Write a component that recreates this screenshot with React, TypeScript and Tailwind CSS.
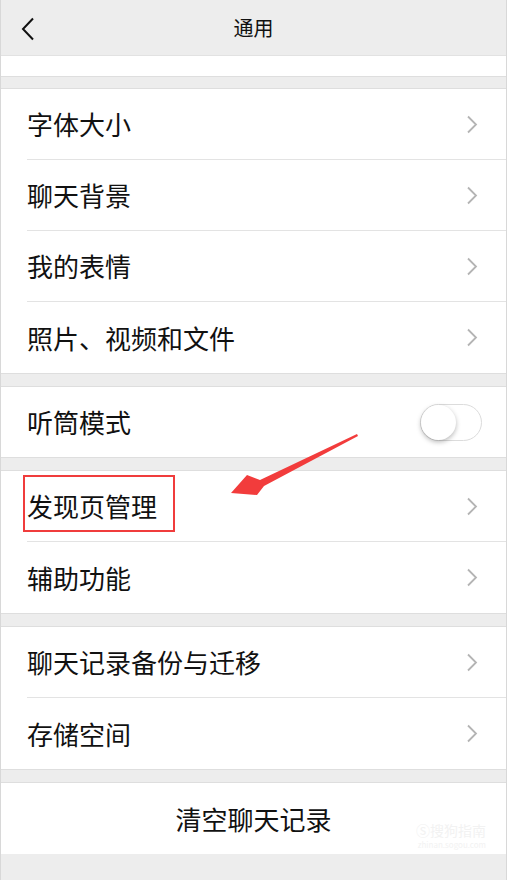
import React from "react";

const font = { fontFamily: '"Noto Sans CJK SC", "Noto Sans", sans-serif' };

function Chevron() {
  return (
    <svg width="12" height="19" viewBox="0 0 12 19" className="shrink-0">
      <polyline points="2,1.5 10,9.5 2,17.5" fill="none" stroke="#b4b4b4" strokeWidth="1.8" />
    </svg>
  );
}

function Row({ label, last, right }: { label: string; last?: boolean; right?: React.ReactNode }) {
  return (
    <div className="h-[71px] pl-[26px] bg-white">
      <div
        className={
          "h-full flex items-center justify-between pr-[28px] " +
          (last ? "" : "border-b border-[#e3e3e3]")
        }
      >
        <span className="text-[26px] text-[#111] leading-none">{label}</span>
        {right ?? <Chevron />}
      </div>
    </div>
  );
}

function Gap({ h = "h-[14px]" }: { h?: string }) {
  return <div className={h + " bg-[#ededed] border-y border-[#dedede]"} />;
}

function Toggle() {
  return (
    <div className="relative w-[62px] h-[37px] rounded-full border border-[#dcdcdc] bg-white -mr-[4px]">
      <div className="absolute left-0 top-0 w-[35px] h-[35px] rounded-full bg-white shadow-[0_2px_5px_rgba(0,0,0,0.28)]" />
    </div>
  );
}

export default function App() {
  return (
    <div style={font} className="relative w-[507px] h-[880px] overflow-hidden bg-[#ededed] border-x border-[#d8d8d8]">
      <div className="h-[56px] relative flex items-center justify-center bg-[#ededed] border-b border-[#e2e2e2]">
        <svg width="14" height="24" viewBox="0 0 14 24" className="absolute left-[20px] top-[17px]">
          <polyline points="12,1.5 2,12 12,22.5" fill="none" stroke="#111" strokeWidth="2" />
        </svg>
        <span className="text-[20px] text-[#111] leading-none">通用</span>
      </div>
      <div className="h-[20px] bg-white" />
      <Gap h="h-[13px]" />
      <Row label="字体大小" />
      <Row label="聊天背景" />
      <Row label="我的表情" />
      <Row label="照片、视频和文件" last />
      <Gap />
      <div className="h-[70px] pl-[26px] bg-white">
        <div className="h-full flex items-center justify-between pr-[28px]">
          <span className="text-[26px] text-[#111] leading-none">听筒模式</span>
          <Toggle />
        </div>
      </div>
      <Gap />
      <div className="h-[71px] pl-[26px] bg-white">
        <div className="h-full flex items-center justify-between pr-[28px] border-b border-[#e3e3e3]">
          <span className="relative text-[26px] text-[#111] leading-none">
            发现页管理
            <span className="absolute -left-[4px] -top-[18px] w-[152px] h-[57px] border-2 border-[#f03c3c]" />
          </span>
          <Chevron />
        </div>
      </div>
      <Row label="辅助功能" last />
      <Gap />
      <Row label="聊天记录备份与迁移" />
      <Row label="存储空间" last />
      <Gap />
      <div className="h-[71px] bg-white flex items-center justify-center relative">
        <span className="text-[26px] text-[#111] leading-none">清空聊天记录</span>
        <div className="absolute right-[20px] top-[40px] flex flex-col items-end gap-[4px] text-[#f2f2f2] leading-none">
          <span className="text-[14px] leading-[14px]">Ⓢ搜狗指南</span>
          <span className="text-[8px] leading-[8px]">zhinan.sogou.com</span>
        </div>
      </div>
      <svg className="absolute left-0 top-0 pointer-events-none" width="507" height="880">
        <polygon
          points="356,434 259,480 246,475 230,493 256,495 263,486 357,436"
          fill="#f23c3c"
        />
      </svg>
    </div>
  );
}
